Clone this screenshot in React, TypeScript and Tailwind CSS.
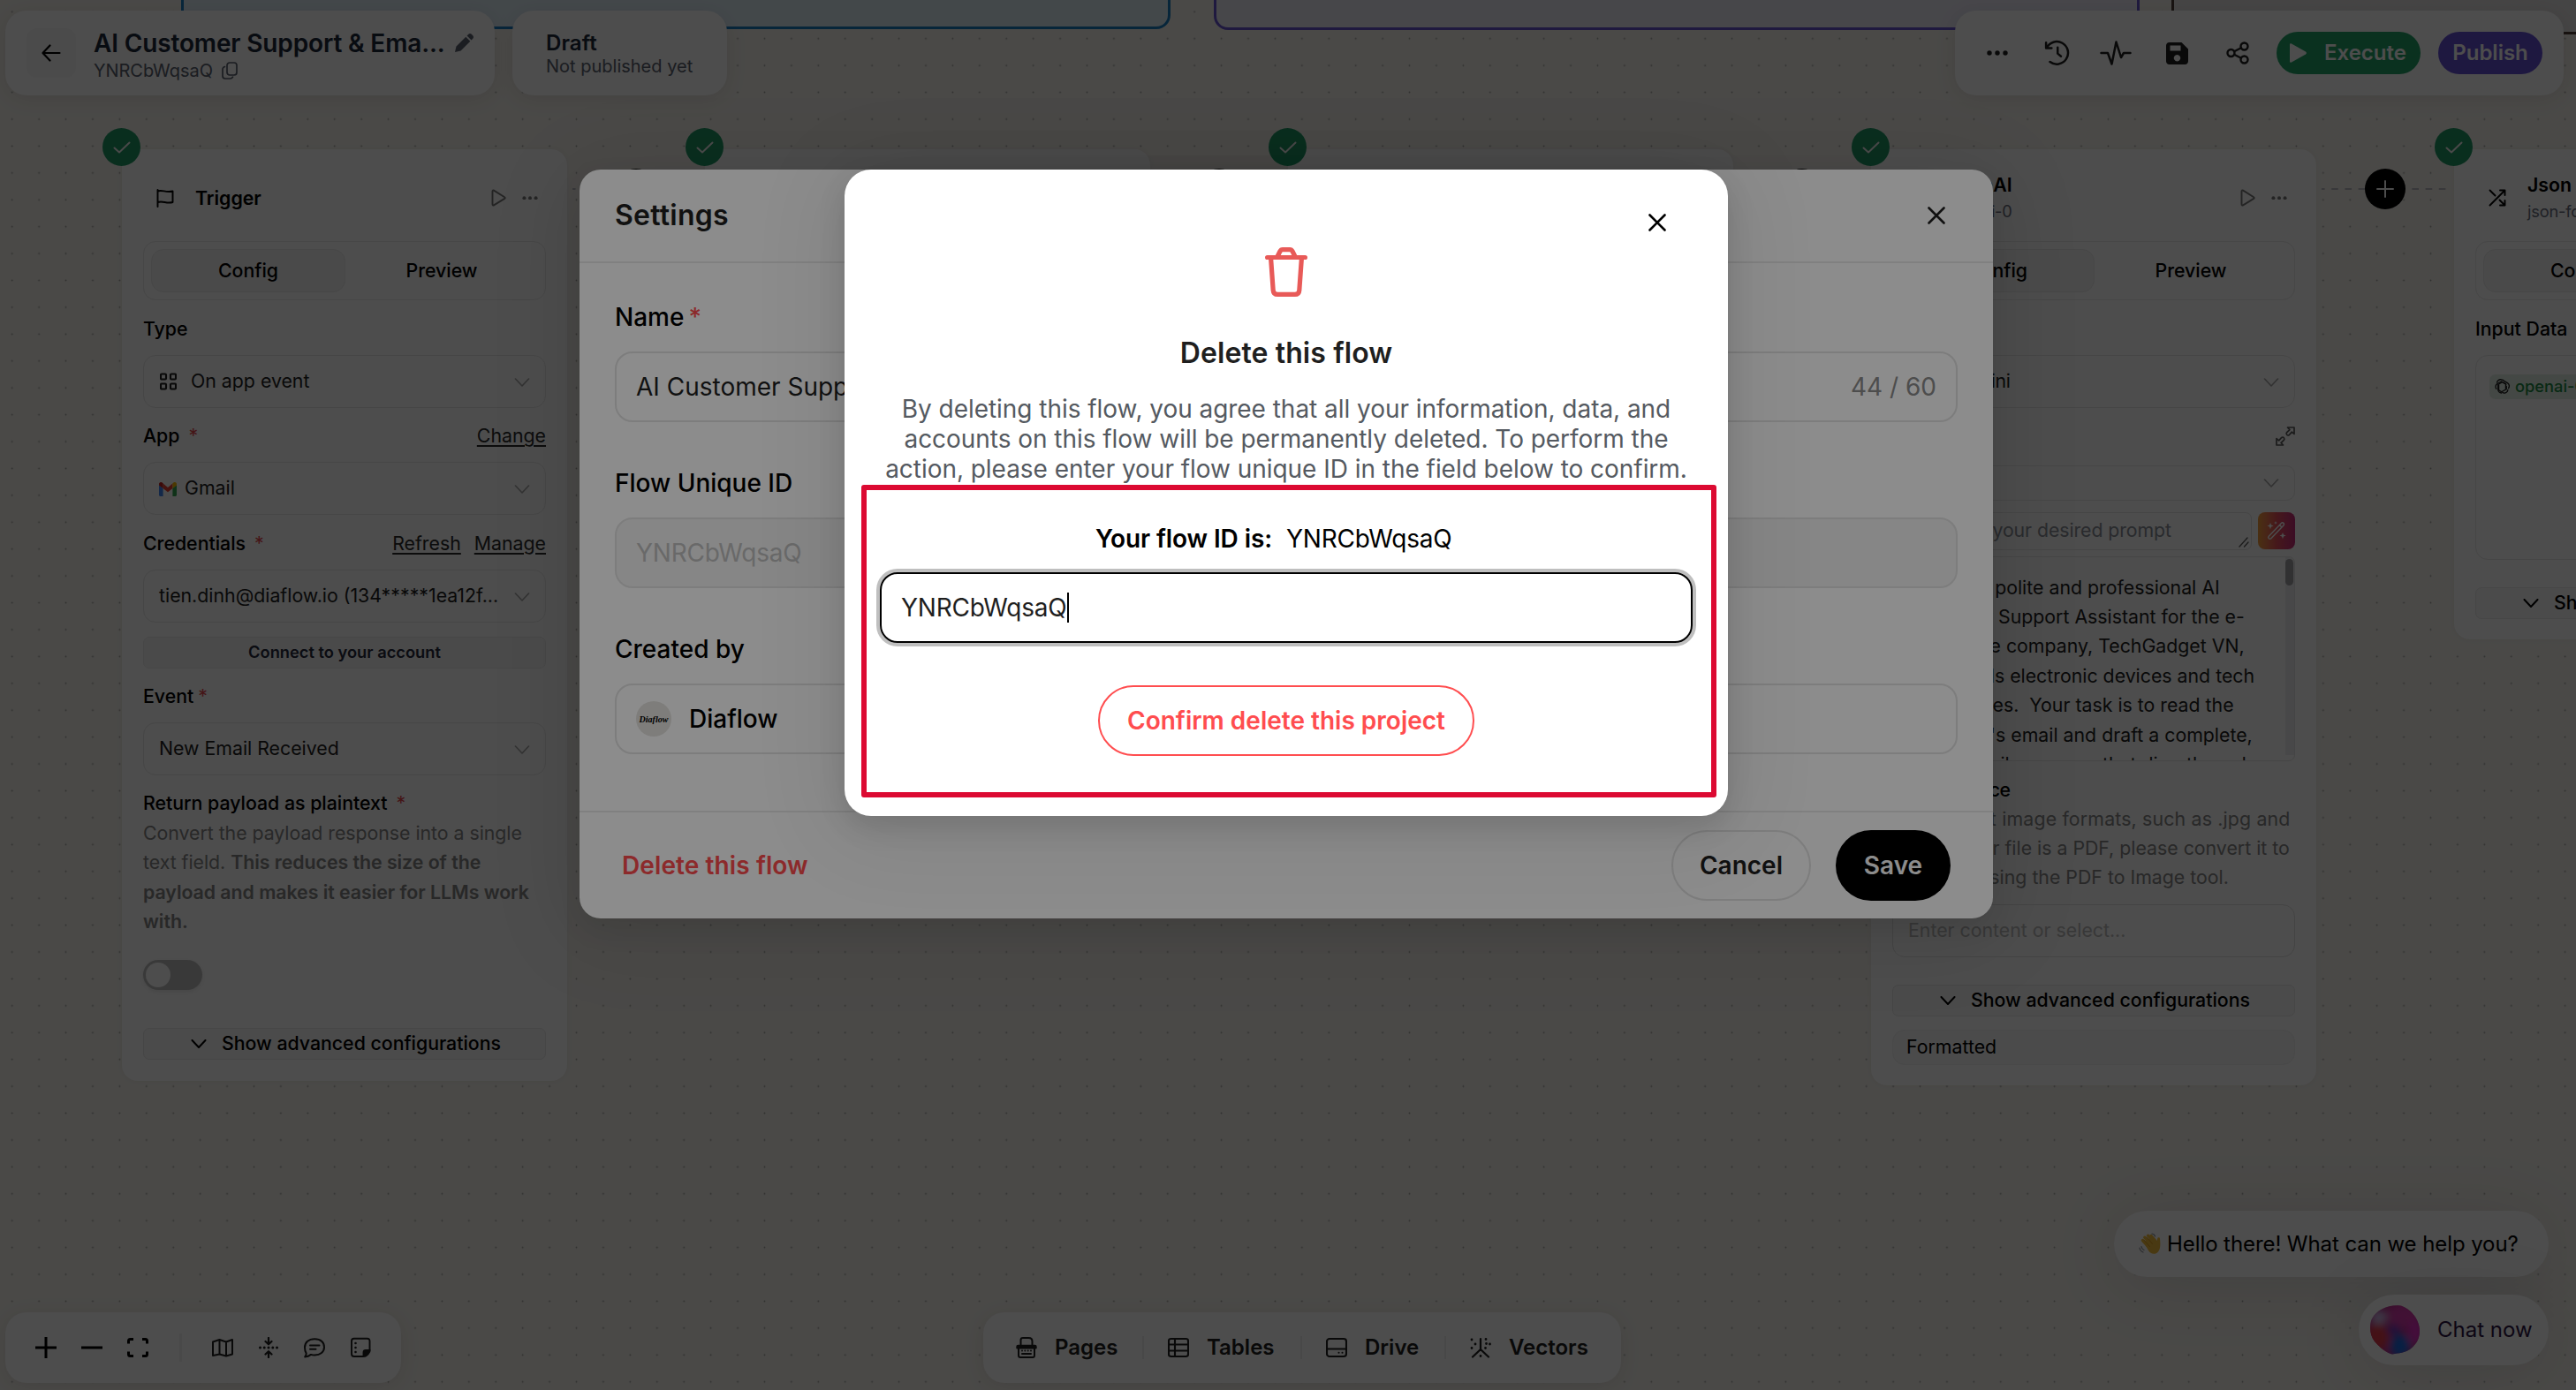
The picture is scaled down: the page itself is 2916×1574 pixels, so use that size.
import type { ReactNode } from 'react';

const cx = (...parts: (string | false | undefined)[]) => parts.filter(Boolean).join(' ');

type IconProps = { className?: string; box?: string; sw?: number; children: ReactNode };

function Icon({ className, box = '0 0 24 24', sw = 2, children }: IconProps) {
  return (
    <svg
      className={cx('shrink-0', className)}
      viewBox={box}
      fill="none"
      stroke="currentColor"
      strokeWidth={sw}
      strokeLinecap="round"
      strokeLinejoin="round"
    >
      {children}
    </svg>
  );
}

const CloseIcon = ({ className }: { className?: string }) => (
  <Icon className={cx('h-5 w-5', className)} box="0 0 20 20" sw={2.6}>
    <path d="M1.5 1.5l17 17M18.5 1.5l-17 17" />
  </Icon>
);

const ChevronIcon = ({ className, sw = 1.6 }: { className?: string; sw?: number }) => (
  <Icon className={cx('h-[10px] w-[18px]', className)} box="0 0 18 10" sw={sw}>
    <path d="M1.5 1l7.5 8 7.5-8" />
  </Icon>
);

const DotsIcon = ({ className }: { className?: string }) => (
  <svg className={cx('shrink-0', className)} viewBox="0 0 24 6" fill="currentColor">
    <circle cx="3" cy="3" r="2.7" />
    <circle cx="12" cy="3" r="2.7" />
    <circle cx="21" cy="3" r="2.7" />
  </svg>
);

const FlagIcon = () => (
  <Icon className="h-[21px] w-5" box="0 0 20 21" sw={1.9}>
    <path d="M1.5 1v19M1.5 2.5c5-2 9 2 17 0v12.5c-7 2-11-2-17 0" />
  </Icon>
);

const ShuffleIcon = () => (
  <Icon className="h-5 w-5" box="0 0 20 20" sw={1.9}>
    <path d="M13 1.5h5.5V7M18.5 1.5L1.5 18.5M1.5 1.5l6 6M12.5 12.5l6 6M18.5 13v5.5H13" />
  </Icon>
);

/* ---------- flow nodes ---------- */

function CheckBadge() {
  return (
    <span className="absolute -left-[22px] -top-[24px] flex h-[43px] w-[43px] items-center justify-center rounded-full bg-[#219a66] text-[#f2f2f2]">
      <Icon className="h-[14px] w-5" box="0 0 20 14" sw={2}>
        <path d="M1.5 7.5l5.500 5L18.500 1.500" />
      </Icon>
    </span>
  );
}

type NodeProps = { className?: string; icon?: ReactNode; title?: string; sub?: string; children?: ReactNode };

function FlowNode({ className, icon, title, sub, children }: NodeProps) {
  return (
    <div
      className={cx(
        'absolute top-[169px] flex w-[504px] flex-col rounded-[18px] bg-white px-6 text-[21.3px] leading-[33.4px] shadow-[0_0_6px_rgba(0,0,0,0.05)]',
        className
      )}
    >
      <CheckBadge />
      {title && (
        <div className="h-[104px] shrink-0 pt-[31px]">
          <div className="flex h-12 items-center">
            <div className="flex w-[59px] justify-start pl-[15px]">{icon}</div>
            <div className="flex-1">
              <div className="font-semibold leading-[30px]">{title}</div>
              {sub && (
                <div className="text-[18.3px] leading-[30px] tracking-[-0.2px] text-[#6b7080]">{sub}</div>
              )}
            </div>
            <Icon className="mr-[18px] h-5 w-[17px] text-[#7a7a7a]" box="0 0 17 20" sw={1.9}>
              <path d="M1.5 2.4v15.2c0 .8.8 1.2 1.5.8l12.2-7.5c.7-.4.7-1.3 0-1.7L3 1.6c-.7-.4-1.5 0-1.5.8z" />
            </Icon>
            <DotsIcon className="mr-[9px] h-[4.400px] w-[18px] text-[#7a7a7a]" />
          </div>
        </div>
      )}
      {children}
    </div>
  );
}

function Tabs() {
  return (
    <div className="flex h-[67px] shrink-0 rounded-[14px] border border-[#ebebeb] p-2 font-medium">
      <div className="flex flex-1 items-center justify-center rounded-[14px] border border-[#ebebeb] bg-[#f8f8f8]">
        Config
      </div>
      <div className="flex flex-1 items-center justify-center">Preview</div>
    </div>
  );
}

type LabelProps = { text: string; required?: boolean; tight?: boolean; links?: string[] };

function FieldLabel({ text, required, tight, links }: LabelProps) {
  return (
    <div className="mb-[12.5px] mt-4 flex h-[33px] shrink-0 items-center">
      <span className="font-medium">{text}</span>
      {required && <span className={cx('text-[#e5484d]', tight ? 'ml-[5px]' : 'ml-[10px]')}>*</span>}
      <div className="ml-auto flex gap-[15px] text-[#2b2b2b]">
        {links?.map((link) => (
          <span key={link} className="underline decoration-[1.5px] underline-offset-[3px]">
            {link}
          </span>
        ))}
      </div>
    </div>
  );
}

function SelectBox({ icon, children }: { icon?: ReactNode; children?: ReactNode }) {
  return (
    <div className="flex h-[60px] shrink-0 items-center rounded-[14px] border border-[#e9e9e9] px-[17px] text-[#1f1f1f]">
      {icon}
      <span className="whitespace-nowrap">{children}</span>
      <ChevronIcon className="ml-auto mt-[2px] text-[#a8a8a8]" />
    </div>
  );
}

function Advanced({ className }: { className?: string }) {
  return (
    <div
      className={cx(
        'flex h-9 shrink-0 items-center rounded-[7px] border border-[#e9e9e9] bg-[#fafafa] pl-[53px] font-medium whitespace-nowrap',
        className
      )}
    >
      <ChevronIcon className="mr-[17px]" sw={2} />
      Show advanced configurations
    </div>
  );
}

const GmailIcon = () => (
  <svg className="mr-[9px] mt-[2px] h-4 w-5 shrink-0" viewBox="0 0 20 16">
    <path d="M0 2.2V14.6c0 .8.6 1.4 1.4 1.4h3.2V7L0 3z" fill="#4285f4" />
    <path d="M20 2.2V14.6c0 .8-.6 1.4-1.4 1.4h-3.2V7L20 3z" fill="#34a853" />
    <path d="M15.4 1.6L10 6 4.600 1.600V7l5.400 4.300L15.400 7z" fill="#ea4335" />
    <path d="M15.400 1.600V7L20 3.500V2.200C20 .3 17.800-.7 16.300.5z" fill="#fbbc04" />
    <path d="M4.600 1.600V7L0 3.500V2.200C0 .3 2.200-.7 3.700.5z" fill="#c5221f" />
  </svg>
);

function TriggerNode() {
  return (
    <FlowNode className="left-[138px] h-[1055px]" icon={<FlagIcon />} title="Trigger">
      <Tabs />
      <FieldLabel text="Type" />
      <SelectBox
        icon={
          <Icon className="ml-[1px] mr-[16px] h-5 w-[19px]" box="0 0 19 19" sw={2.1}>
            <rect x="1" y="1" width="6" height="6" rx="1" />
            <rect x="12" y="1" width="6" height="6" rx="1" />
            <rect x="1" y="12" width="6" height="6" rx="1" />
            <rect x="12" y="12" width="6" height="6" rx="1" />
          </Icon>
        }
      >
        On app event
      </SelectBox>
      <FieldLabel text="App" required links={['Change']} />
      <SelectBox icon={<GmailIcon />}>Gmail</SelectBox>
      <FieldLabel text="Credentials" required links={['Refresh', 'Manage']} />
      <SelectBox>tien.dinh@diaflow.io (134*****1ea12f...</SelectBox>
      <div className="mt-4 flex h-9 shrink-0 items-center justify-center rounded-[7px] border border-[#ececec] bg-[#f8f8f8] text-[18.3px] font-semibold text-[#262b3c]">
        Connect to your account
      </div>
      <FieldLabel text="Event" required tight />
      <SelectBox>New Email Received</SelectBox>
      <div className="mt-[15px] flex h-[33px] items-center">
        <span className="font-medium">Return payload as plaintext</span>
        <span className="ml-[10px] text-[#e5484d]">*</span>
      </div>
      <p className="mt-px whitespace-nowrap tracking-[-0.03px] text-[#878787]">
        Convert the payload response into a single
        <br />
        text field. <b className="font-semibold">This reduces the size of the</b>
        <br />
        <b className="font-semibold">payload and makes it easier for LLMs work</b>
        <br />
        <b className="font-semibold">with.</b>
      </p>
      <div className="mt-[26px] h-[34px] w-[67px] rounded-full bg-[#bfbfbf] p-[3px] shadow-[0_2px_4px_rgba(0,0,0,0.08)]">
        <div className="h-7 w-7 rounded-full bg-white" />
      </div>
      <Advanced className="mt-[43px]" />
    </FlowNode>
  );
}

const promptLines = [
  'You are a polite and professional AI',
  'Customer Support Assistant for the e-',
  'commerce company, TechGadget VN,',
  'which sells electronic devices and tech',
  'accessories.\u00a0 Your task is to read the',
  "customer's email and draft a complete,",
  'ready email response that directly and',
];

function OpenAiNode() {
  return (
    <FlowNode className="left-[2118px] h-[1060px]" title="OpenAI" sub="openai-0">
      <Tabs />
      <FieldLabel text="Model" required />
      <SelectBox>
        <span className="tracking-[-0.45px]">gpt-4o-mini</span>
      </SelectBox>
      <div className="mt-4 flex h-[33px] shrink-0 items-center justify-between font-medium">
        Prompt
        <Icon className="h-[22px] w-[22px] text-[#5c5c5c]" box="0 0 22 22" sw={1.7}>
          <path d="M13.5 1h7.5v7.5l-2.6-2.4-3 3.2c-.8.8-2 .8-2.7 0-.7-.8-.7-1.9 0-2.6l3.2-3.1zM8.5 21H1v-7.5l2.6 2.4 3-3.2c.8-.8 2-.8 2.7 0 .7.8.7 1.9 0 2.6l-3.2 3.1z" />
        </Icon>
      </div>
      <div className="mt-4 flex h-10 shrink-0 items-center justify-end rounded-[10px] border border-[#e9e9e9] pr-[17px] text-[#a8a8a8]">
        <ChevronIcon />
      </div>
      <div className="mt-[13px] flex h-[43px] shrink-0 justify-between">
        <div className="relative flex w-[407px] items-center rounded-[7px] border border-[#e7e7e7] pl-[17px] text-[#8a8f98]">
          <span className="whitespace-nowrap tracking-[-0.08px]">Describe your desired prompt</span>
          <Icon className="absolute bottom-[2px] right-[2px] h-3 w-3 text-[#5c5c5c]" box="0 0 12 12" sw={1.3}>
            <path d="M1 11L10 1M6.5 11L11 6" />
          </Icon>
        </div>
        <div className="flex h-[42px] w-[42px] items-center justify-center rounded-[8px] bg-linear-to-r from-[#f5a13c] via-[#e8505b] to-[#c62a7c] text-white">
          <Icon className="h-6 w-6" box="0 0 24 24" sw={1.5}>
            <path d="M3.2 18.2L17.4 3.4c.7-.7 1.8-.7 2.5 0s.7 1.8 0 2.5L5.8 20.8c-.7.7-1.8.7-2.5 0s-.8-1.9-.1-2.6zM15.5 5.5l2.5 2.5" />
            <path
              d="M5 3l1 2.600L8.600 6.600 6 7.600 5 10.200 4 7.600 1.400 6.600 4 5.600zM19 14l1 2.600 2.600 1-2.600 1-1 2.600-1-2.600-2.600-1 2.600-1zM11 1l.5 1.500 1.500.5-1.500.5L11 5l-.5-1.500L9 3l1.500-.5z"
              fill="currentColor"
              stroke="none"
            />
          </Icon>
        </div>
      </div>
      <div className="mt-[7px] flex h-[232px] shrink-0 justify-between overflow-hidden rounded-[7px] border border-[#e7e7e7]">
        <div className="pl-[15px] pt-[18px] text-[#1f1f1f]">
          {promptLines.map((line) => (
            <div key={line} className="whitespace-nowrap">
              {line}
            </div>
          ))}
        </div>
        <div className="h-[224px] w-[10px] bg-[#f0f1f4] pt-[2px]">
          <div className="h-[30px] w-[9px] rounded-full bg-[#a5a5a8]" />
        </div>
      </div>
      <div className="mt-4 h-[33px] shrink-0 font-medium tracking-[-0.35px]">Image source</div>
      <p className="h-[100px] shrink-0 whitespace-nowrap text-[#878787]">
        <span className="tracking-[0.17px]">We support image formats, such as .jpg and</span>
        <br />
        .png. If your file is a PDF, please convert it to
        <br />
        an image using the PDF to Image tool.
      </p>
      <div className="mt-[13px] flex h-[60px] shrink-0 items-center rounded-[14px] border border-[#e2e2e2] pl-[17px] text-[#bcbcbc]">
        Enter content or select...
      </div>
      <Advanced className="mt-[31px]" />
      <div className="mt-[15px] flex h-10 shrink-0 items-center rounded-[14px] border border-[#f2f2f2] bg-[#f9f9f9] pl-[15px]">
        Formatted
      </div>
    </FlowNode>
  );
}

function JsonNode() {
  return (
    <FlowNode className="left-[2778px] h-[555px]" icon={<ShuffleIcon />} title="Json formatter" sub="json-formatter-0">
      <Tabs />
      <FieldLabel text="Input Data" />
      <div className="h-[232px] shrink-0 rounded-[14px] border border-[#e9e9e9] pl-[15px] pt-[21px]">
        <div className="flex h-7 w-[140px] items-center rounded-[7px] bg-[#e2f0e6] pl-[5px] text-[18.3px] font-medium text-[#1e8a45]">
          <Icon className="mr-[5px] h-[19px] w-[19px] text-[#1f1f1f]" box="0 0 24 24" sw={1.7}>
            <path d="M11 21.500a5 5 0 0 1-5-5V9.500L12 6l5.500 3.200" />
            <path d="M3.500 15.500a5 5 0 0 1 1-7L11 5l6 3.500v6.500" />
            <path d="M4.500 6.500A5 5 0 0 1 11 2.500c2 0 3 .7 4 2l5 3a5 5 0 0 1 1 7" />
            <path d="M20 17a5 5 0 0 1-6 4.500l-7-4V10M18 12v4l-6 3.300" />
          </Icon>
          openai-0
        </div>
      </div>
      <Advanced className="mt-[31px]" />
    </FlowNode>
  );
}

function AddStep({ className }: { className: string }) {
  return (
    <div className={cx('absolute top-[191px] flex h-[46px] w-[152px] items-center justify-center', className)}>
      <svg className="absolute inset-0 h-full w-full" viewBox="0 0 152 46">
        <path d="M4 23h146" stroke="#a9a9b2" strokeWidth="1.5" strokeDasharray="7.6 7.6" strokeDashoffset="4" />
      </svg>
      <div className="relative flex h-[46px] w-[46px] items-center justify-center rounded-full bg-black text-white">
        <Icon className="h-5 w-5" box="0 0 20 20" sw={2}>
          <path d="M10 1v18M1 10h18" />
        </Icon>
      </div>
    </div>
  );
}

function Canvas() {
  return (
    <div className="absolute inset-0">
      <svg className="absolute inset-0 h-full w-full">
        <pattern id="grid-dots" x="-1.5" y="-1.9" width="30.42" height="30.42" patternUnits="userSpaceOnUse">
          <circle cx="15.21" cy="15.21" r="0.9" fill="#a0a09c" />
        </pattern>
        <rect width="100%" height="100%" fill="url(#grid-dots)" />
      </svg>
      <div className="absolute -top-10 left-[205px] h-[73px] w-[1120px] rounded-[16px] border-[3px] border-[#1b7fc4] bg-[#e0eff8]" />
      <div className="absolute -top-10 left-[1374px] h-[74px] w-[1048px] rounded-[16px] border-[3px] border-[#6a56d2] bg-[#edebf8]" />
      <div className="absolute -top-10 left-[2458px] h-[79px] w-[900px] rounded-[16px] border-[3px] border-[#51413a] bg-[#e8e6e6]" />
      <AddStep className="left-[644px]" />
      <AddStep className="left-[1304px]" />
      <AddStep className="left-[1964px]" />
      <AddStep className="left-[2624px]" />
      <TriggerNode />
      <FlowNode className="left-[798px] h-[600px]" />
      <FlowNode className="left-[1458px] h-[600px]" />
      <OpenAiNode />
      <JsonNode />
    </div>
  );
}

/* ---------- floating bars ---------- */

const panel = 'rounded-[24px] bg-white shadow-[0_4px_24px_rgba(0,0,0,0.09)]';

function TopBar() {
  return (
    <header className="relative flex items-start pl-[6px] pr-[14px] pt-3">
      <div className={cx(panel, 'flex h-24 w-[554px] items-center pl-6')}>
        <div className="flex h-14 w-14 items-center justify-center rounded-[12px] bg-[#fafafa]">
          <Icon className="h-5 w-[22px]" box="0 0 22 20" sw={2.2}>
            <path d="M20.5 10H1.5M9.5 1.5L1.5 10l8 8.5" />
          </Icon>
        </div>
        <div className="ml-5 mt-[3px] flex flex-col">
          <div className="flex items-center">
            <span className="whitespace-nowrap text-[28px] font-semibold leading-[36px] tracking-[-0.14px] text-[#1e293b]">
              AI Customer Support &amp; Ema...
            </span>
            <svg className="ml-[11px] h-[21px] w-[21px] text-[#5b6270]" viewBox="0 0 21 21" fill="currentColor">
              <path d="M0 21l1.5-6.5L12.3 3.7l5 5L6.5 19.5zM13.6 2.4L15.3.8c1-1 2.5-1 3.5 0l1.4 1.4c1 1 1 2.5 0 3.5l-1.6 1.7z" />
            </svg>
          </div>
          <div className="flex items-center text-[20px] leading-[26px] tracking-[-0.05px] text-[#5b6270]">
            YNRCbWqsaQ
            <Icon className="ml-[10px] h-5 w-[18px]" box="0 0 18 20" sw={1.7}>
              <rect x="6" y="1" width="11" height="14" rx="3" />
              <path d="M3.500 5.500C2 6 1 7 1 8.500v7.500c0 1.800 1.200 3 3 3h5.500c1.500 0 2.500-.7 3-1.800" />
            </Icon>
          </div>
        </div>
      </div>
      <div className={cx(panel, 'ml-5 flex h-24 w-[243px] flex-col justify-center pl-[38px] pt-[2px]')}>
        <div className="text-[24px] font-semibold leading-[28px] tracking-[0.1px] text-[#1e293b]">Draft</div>
        <div className="text-[20px] leading-[25px] text-[#5b6270]">Not published yet</div>
      </div>
      <div className={cx(panel, 'ml-auto flex h-24 w-[689px] items-center pl-[36px] text-[#222]')}>
        <DotsIcon className="h-6 w-6" />
        <Icon className="ml-10 h-[30px] w-[30px]" sw={2}>
          <path d="M2.5 2.5v5h5M3 7.5A10.2 10.2 0 1 1 6 20" />
          <path d="M13 7v5.500l3 2.500" />
        </Icon>
        <Icon className="ml-[34px] h-7 w-9" box="0 0 36 28" sw={2.5}>
          <path d="M1.5 14h7.5l4.5 12.500L18.500 1.500 24 19l3-5h7.500" />
        </Icon>
        <svg className="ml-[39px] h-[25px] w-[25px]" viewBox="0 0 25 25" fill="currentColor" fillRule="evenodd">
          <path d="M3.5 0H17.5L25 7.500V21.500C25 23.400 23.400 25 21.500 25H3.500C1.600 25 0 23.400 0 21.500V3.500C0 1.600 1.600 0 3.500 0zM4.500 3.500V9.500H16.500V3.500zM12.500 14a3.700 3.700 0 1 0 .001 0z" />
        </svg>
        <Icon className="ml-[43px] h-[26px] w-[26px]" box="0 0 26 26" sw={2.4}>
          <circle cx="20.5" cy="5.5" r="4" />
          <circle cx="5.5" cy="13" r="4" />
          <circle cx="20.5" cy="20.5" r="4" />
          <path d="M9 11.200l8-4M9 14.800l8 4" />
        </Icon>
        <div className="ml-[31px] flex h-12 w-[163px] items-center rounded-full bg-[#24a56a] pl-[15px] text-[24px] font-semibold text-white">
          <svg className="mr-5 h-[22px] w-[19px]" viewBox="0 0 19 22" fill="currentColor">
            <path d="M0 1.500C0 .3 1 0 2 .5l16 9c1.200.7 1.200 2.200 0 2.900l-16 9.100c-1 .5-2 .2-2-1z" />
          </svg>
          Execute
        </div>
        <div className="ml-5 flex h-12 w-[118px] items-center justify-center rounded-full bg-[#6650d8] text-[24px] font-semibold text-white">
          Publish
        </div>
      </div>
    </header>
  );
}

function ZoomBar() {
  return (
    <div className={cx(panel, 'flex h-20 w-[448px] items-center pl-[34px]')}>
      <Icon className="h-6 w-6" sw={3}>
        <path d="M12 0v24M0 12h24" strokeLinecap="butt" />
      </Icon>
      <Icon className="ml-7 h-6 w-6" sw={3}>
        <path d="M0 12h24" strokeLinecap="butt" />
      </Icon>
      <Icon className="ml-7 h-[22px] w-6" box="0 0 24 22" sw={3}>
        <path
          d="M1.500 6.500V3.500c0-1.300.7-2 2-2h3.500M17 1.500h3.500c1.300 0 2 .7 2 2v3M22.500 15.500v3c0 1.300-.7 2-2 2H17M7 20.500H3.500c-1.300 0-2-.7-2-2v-3"
          strokeLinecap="butt"
        />
      </Icon>
      <div className="ml-[35px] h-8 w-[3px] bg-[#f5f5f5]" />
      <div className="flex text-[#222]">
        <Icon className="ml-[34px] h-6 w-6" sw={2}>
          <path d="M1 5.500l7.500-2.500 7.500 2.500 7-2.500v16.500l-7 2-7.500-2L1 21zM8.500 3v16.500M16 5.500v16" />
        </Icon>
        <Icon className="ml-7 h-6 w-6" sw={2.2}>
          <path d="M12 1v6M8.500 5L12 8.300 15.500 5M12 23v-6M8.500 19.500L12 16.200l3.500 3.300" />
          <path d="M2.500 12h.01M7.200 12h.01M12 12h.01M16.800 12h.01M21.500 12h.01" strokeWidth="3" />
        </Icon>
        <Icon className="ml-7 h-6 w-6" sw={2}>
          <path d="M1.200 22.500c1-1.200 1.500-2.600 1.500-4C1.500 16.500 1 14.500 1 12 1 6 5.500 2.200 12.200 2.200S23 6 23 11.500s-4.500 9-10.800 9c-1.500 0-3-.2-4.200-.6-2 1.500-4.300 2.400-6.800 2.600zM7 9.500h10.500M7 13.800h6.500" />
        </Icon>
        <Icon className="ml-7 h-6 w-6" sw={1.9}>
          <path d="M22.500 14V4.500c0-1.700-1-2.700-2.700-2.700H4.700C3 1.800 2 2.800 2 4.500v14.800C2 21 3 22 4.700 22H15" />
          <path
            d="M15.500 22v-4.500c0-1.600.9-2.500 2.500-2.500h4.800c0 2-1 3-2.300 4.400C19 20.800 18 22.200 15.500 22z"
            fill="currentColor"
          />
          <path d="M6.500 7h.01M6.500 12h.01M6.500 17h.01" strokeWidth="2.6" />
        </Icon>
      </div>
    </div>
  );
}

const PagesIcon = () => (
  <Icon className="h-6 w-6" sw={2}>
    <path d="M5.500 8.500V3.500c0-1.500.8-2.400 2.400-2.400h6.600c2.600 0 4 1.400 4 4v3.400" />
    <path d="M1.300 12.500V11c0-.8.500-1.200 1.200-1.200h19c.7 0 1.200.4 1.200 1.200v1.500z" fill="currentColor" />
    <path d="M3 12.500V21c0 1.300.7 2 2 2h14c1.300 0 2-.7 2-2v-8.500M7 19h10" />
    <path d="M7 15.500h.01M10.300 15.500h.01M13.700 15.500h.01M17 15.500h.01" />
  </Icon>
);

const TablesIcon = () => (
  <Icon className="h-6 w-6" sw={2.1}>
    <rect x="1" y="2" width="22" height="20" rx="2.5" />
    <path d="M1 8.500h22M1 15.500h22M8 2v20" />
  </Icon>
);

const DriveIcon = () => (
  <Icon className="h-6 w-6" sw={2.1}>
    <rect x="1" y="2" width="22" height="20" rx="3" />
    <path d="M1 13.500h22M14.500 17.800h.01M18.500 17.800h.01" />
  </Icon>
);

const VectorsIcon = () => (
  <Icon className="h-6 w-6" sw={2.2}>
    <path d="M12 2v12M12 14l-9 8.500M12 14l9 8.500" />
    <path
      d="M2 3h.01M6 8h.01M2 12.500h.01M18 2.500h.01M17.500 12.500h.01M18.500 7.500h.01M22.500 8h.01M12 21.500h.01"
      strokeWidth="2.8"
    />
  </Icon>
);

const resources = [
  { label: 'Pages', icon: <PagesIcon />, width: 'w-[172px]' },
  { label: 'Tables', icon: <TablesIcon />, width: 'w-[179px]' },
  { label: 'Drive', icon: <DriveIcon />, width: 'w-[163px]' },
  { label: 'Vectors', icon: <VectorsIcon />, width: 'w-[170px]' },
];

function ResourceBar() {
  return (
    <div className={cx(panel, 'flex h-20 w-[722px] items-center pl-[8px] text-[#222]')}>
      {resources.map((item, i) => (
        <div key={item.label} className={cx('flex items-center', item.width)}>
          <div className={cx('h-[26px] w-[2px]', i > 0 && 'bg-[#efefef]')} />
          <div className="ml-[27px]">{item.icon}</div>
          <span className="ml-5 text-[24px] font-semibold">{item.label}</span>
        </div>
      ))}
    </div>
  );
}

const WavingHand = () => (
  <svg className="h-[26px] w-[26px] shrink-0" viewBox="0 0 26 26" fill="none" strokeLinecap="round">
    <path d="M4.5 8.5l8 9M6.8 5.2l9 10M10.5 3.2l8.5 9.5M14 3.5l6 7" stroke="#f5bd3c" strokeWidth="3.4" />
    <path d="M6 11l5 9c2.500 4.500 8 5 11 1.500s2.500-9.500 2-15c-.2-1.700-2.500-1.500-2.800 0l-.7 4.500L13 6z" fill="#f5bd3c" />
    <path d="M6.300 8.500l6 7M9.500 5.500l6 7" stroke="#d08f1c" strokeWidth="0.8" />
    <path d="M1 17c.3 2.500 1.500 4 4 5M3 15.500c.3 2 1.300 3.200 3 4M15 1c2 .3 3 1.200 3.500 3" stroke="#8d9299" strokeWidth="1.2" />
  </svg>
);

function ChatWidget() {
  return (
    <div className="absolute bottom-[28px] right-[31px] flex flex-col items-end gap-5">
      <div className="flex h-[75px] w-[492px] items-center rounded-full bg-white pl-[28px] shadow-[0_8px_80px_rgba(20,20,30,0.12)]">
        <WavingHand />
        <span className="ml-[6px] whitespace-nowrap text-[24px] tracking-[-0.08px]">
          Hello there! What can we help you?
        </span>
      </div>
      <div className="flex h-20 w-[215px] items-center rounded-full bg-white pl-[13px] shadow-[0_8px_80px_rgba(20,20,30,0.12)]">
        <svg className="h-14 w-14 shrink-0" viewBox="0 0 56 56">
          <defs>
            <filter id="orb-blur" x="-50%" y="-50%" width="200%" height="200%">
              <feGaussianBlur stdDeviation="4.5" />
            </filter>
            <clipPath id="orb-shape">
              <path d="M14 4C20 1 31-1 37 1.500 46 5 56 16 56 29c0 9-4 16-11 21-6 4-12 4-20 5.500C18 54 10 47 5 41 0 35-1 25 1 18 3 12 8 7 14 4z" />
            </clipPath>
          </defs>
          <g clipPath="url(#orb-shape)">
            <rect width="56" height="56" fill="#b8328e" />
            <g filter="url(#orb-blur)">
              <ellipse cx="38" cy="12" rx="18" ry="13" fill="#d93aae" />
              <ellipse cx="10" cy="14" rx="9" ry="8" fill="#cbbbe8" />
              <ellipse cx="8" cy="36" rx="13" ry="15" fill="#e23a48" />
              <ellipse cx="51" cy="30" rx="8" ry="14" fill="#e32fc8" />
              <ellipse cx="34" cy="46" rx="11" ry="13" fill="#1f6ae0" />
              <ellipse cx="27" cy="28" rx="7" ry="6" fill="#5a3cc4" />
            </g>
          </g>
        </svg>
        <span className="ml-5 whitespace-nowrap text-[24px] text-[#2e1546]">Chat now</span>
      </div>
    </div>
  );
}

/* ---------- dialogs ---------- */

function SettingsModal() {
  return (
    <div className="absolute inset-0 flex items-start justify-center bg-black/45 pr-1 pt-[192px]">
      <div className="flex h-[848px] w-[1600px] flex-col rounded-[24px] bg-white text-[28px] shadow-[0_12px_96px_16px_rgba(0,0,0,0.08),0_12px_32px_rgba(0,0,0,0.08)]">
        <div className="flex h-[106px] shrink-0 items-center justify-between border-b-2 border-[#e9e9e9] pl-10 pr-[54px] text-[#1f1f1f]">
          <h2 className="text-[32px] font-semibold tracking-[0.25px]">Settings</h2>
          <CloseIcon />
        </div>
        <div className="flex flex-1 flex-col px-10 pt-[39px]">
          <label className="flex h-11 font-medium leading-[44px]">
            Name <span className="ml-[5px] text-[#ff4d4f]">*</span>
          </label>
          <div className="mt-[17px] flex h-20 items-center justify-between rounded-[20px] border-2 border-[#e3e3e3] px-[22px]">
            <span className="text-[#1f1f1f]">AI Customer Support &amp; Email Classification</span>
            <span className="text-[#8c8c8c]">44 / 60</span>
          </div>
          <label className="mt-[47px] h-11 font-medium leading-[44px]">Flow Unique ID</label>
          <div className="mt-[17px] flex h-20 items-center rounded-[20px] border-2 border-[#e3e3e3] bg-[#f5f5f5] px-[22px] tracking-[-0.2px] text-[#bfbfbf]">
            YNRCbWqsaQ
          </div>
          <label className="mt-[47px] h-11 font-medium leading-[44px]">Created by</label>
          <div className="mt-[17px] flex h-20 items-center rounded-[20px] border-2 border-[#e3e3e3] px-[22px]">
            <div className="flex h-10 w-10 items-center justify-center rounded-full bg-[#e6e4e0]">
              <span className="font-['Liberation_Serif',serif] text-[10px] font-bold italic">Diaflow</span>
            </div>
            <span className="ml-5 font-medium">Diaflow</span>
          </div>
        </div>
        <div className="flex h-[122px] shrink-0 items-center border-t-2 border-[#e9e9e9] pl-12 pr-12 font-semibold">
          <span className="tracking-[0.1px] text-[#ff4d4f]">Delete this flow</span>
          <button className="ml-auto h-20 w-[158px] rounded-full border-2 border-[#e3e3e3] text-[#1f1f1f]">Cancel</button>
          <button className="ml-7 h-20 w-[130px] rounded-full bg-black text-white">Save</button>
        </div>
      </div>
    </div>
  );
}

function DeleteModal() {
  return (
    <div className="absolute inset-0 flex items-start justify-center bg-black/45 pr-1 pt-[192px]">
      <div className="relative flex h-[732px] w-[1000px] flex-col items-center rounded-[30px] bg-white px-10 pt-[88px] text-[28px] leading-[34px] shadow-[0_12px_96px_16px_rgba(0,0,0,0.08),0_12px_32px_rgba(0,0,0,0.12)]">
        <CloseIcon className="absolute right-[70px] top-[50px]" />
        <Icon className="h-14 w-12 text-[#e85a58]" box="0 0 48 56" sw={5.2}>
          <path d="M2.600 11.500h42.800M14 10.500l3-6c.6-1.200 1.500-1.900 3-1.900h8c1.500 0 2.400.7 3 1.900l3 6" />
          <path d="M6.600 12.500l2.600 36.200c.2 2.900 2 4.700 5 4.700h19.600c3 0 4.800-1.800 5-4.700l2.600-36.200" />
        </Icon>
        <h3 className="mt-[42px] text-[32px] font-semibold leading-[44px] tracking-[0.1px] text-[#1f1f1f]">
          Delete this flow
        </h3>
        <p className="mt-6 whitespace-nowrap text-center tracking-[-0.04px] text-[#555a61]">
          By deleting this flow, you agree that all your information, data, and
          <br />
          accounts on this flow will be permanently deleted. To perform the
          <br />
          action, please enter your flow unique ID in the field below to confirm.
        </p>
        <div className="mt-[45px] flex w-full gap-[16px] pl-[244px]">
          <span className="font-semibold tracking-[-0.1px]">Your flow ID is:</span>
          <span className="tracking-[-0.2px]">YNRCbWqsaQ</span>
        </div>
        <div className="mt-[21px] flex h-20 w-full shrink-0 items-center rounded-[20px] border-2 border-black px-[22px] text-[#1f1f1f] shadow-[0_0_0_4px_#bfbfbf]">
          <span className="tracking-[-0.2px]">YNRCbWqsaQ</span>
          <span className="h-[34px] w-[2px] bg-black" />
        </div>
        <button className="mt-12 h-20 w-[426px] shrink-0 rounded-full border-2 border-[#ff4d4f] font-semibold text-[#ff4d4f]">
          Confirm delete this project
        </button>
        <div className="absolute left-[19px] top-[357px] h-[354px] w-[968px] rounded-[3px] border-[6px] border-[#dc0a32]" />
      </div>
    </div>
  );
}

export default function App() {
  return (
    <div className="relative flex h-[1574px] w-[2916px] flex-col justify-between overflow-hidden bg-[#f6f3ed] font-['Inter',sans-serif] text-black">
      <Canvas />
      <TopBar />
      <footer className="relative flex gap-[659px] pb-2 pl-[6px]">
        <ZoomBar />
        <ResourceBar />
      </footer>
      <ChatWidget />
      <SettingsModal />
      <DeleteModal />
    </div>
  );
}
